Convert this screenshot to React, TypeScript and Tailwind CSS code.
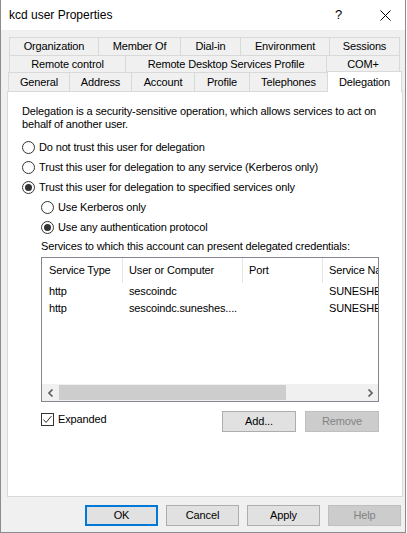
import React from 'react';

const font = { fontFamily: '"Liberation Sans", Arial, sans-serif' };

function Radio({ checked, label }: { checked?: boolean; label: string }) {
  return (
    <div className="flex items-center h-[13px]">
      <span className="w-[13px] h-[13px] rounded-full border border-[#333333] bg-white flex items-center justify-center shrink-0">
        {checked && <span className="w-[7px] h-[7px] rounded-full bg-[#333333]" />}
      </span>
      <span className="ml-[4px] whitespace-nowrap">{label}</span>
    </div>
  );
}

function Tab({ label, w, h, first }: { label: string; w: number; h: string; first?: boolean }) {
  return (
    <div
      className={`${h} ${first ? '' : '-ml-px'} border-t border-l border-r border-[#d9d9d9] bg-[#f0f0f0] flex items-center justify-center whitespace-nowrap`}
      style={{ width: w }}
    >
      {label}
    </div>
  );
}

function Btn({ label, disabled, primary, w = 'w-[73px]' }: { label: string; disabled?: boolean; primary?: boolean; w?: string }) {
  let cls = 'border border-[#adadad] bg-[#e1e1e1] text-black';
  if (disabled) cls = 'border border-[#bfbfbf] bg-[#cccccc] text-[#838383]';
  if (primary) cls = 'border-2 border-[#0078d7] bg-[#e1e1e1] text-black';
  return <div className={`${w} h-[21px] ${cls} flex items-center justify-center`}>{label}</div>;
}

export default function App() {
  return (
    <div className="w-[406px] h-[533px] bg-[#f0f0f0] border-l border-r border-b border-[#8c8c8c] text-[11px] tracking-[-0.15px] text-black overflow-hidden" style={font}>
      {/* Title bar */}
      <div className="h-[30px] bg-white flex items-center tracking-normal">
        <span className="ml-[8px] text-[12px] flex-1">kcd user Properties</span>
        <span className="text-[13px] w-[16px] mr-[29px]">?</span>
        <svg width="11" height="11" viewBox="0 0 11 11" className="mr-[14px]">
          <path d="M0.5 0.5 L10.5 10.5 M10.5 0.5 L0.5 10.5" stroke="#000" strokeWidth="1" />
        </svg>
      </div>

      {/* Tabs */}
      <div className="mt-[7px]">
        <div className="flex ml-[8px]">
          <Tab first label="Organization" w={90} h="h-[18px]" />
          <Tab label="Member Of" w={83} h="h-[18px]" />
          <Tab label="Dial-in" w={61} h="h-[18px]" />
          <Tab label="Environment" w={90} h="h-[18px]" />
          <Tab label="Sessions" w={71} h="h-[18px]" />
        </div>
        <div className="flex ml-[8px]">
          <Tab first label="Remote control" w={117} h="h-[17px]" />
          <Tab label="Remote Desktop Services Profile" w={202} h="h-[17px]" />
          <Tab label="COM+" w={74} h="h-[17px]" />
        </div>
        <div className="flex ml-[7px] items-start h-[19px]">
          <Tab first label="General" w={62} h="h-[19px]" />
          <Tab label="Address" w={63} h="h-[19px]" />
          <Tab label="Account" w={64} h="h-[19px]" />
          <Tab label="Profile" w={56} h="h-[19px]" />
          <Tab label="Telephones" w={79} h="h-[19px]" />
          <div className="-ml-px -mt-px w-[75px] h-[21px] border-t border-l border-r border-[#d9d9d9] bg-white relative z-10 flex items-center justify-center">
            Delegation
          </div>
        </div>
      </div>

      {/* Panel */}
      <div className="ml-[6px] w-[396px] h-[406px] bg-white border border-[#d9d9d9] pl-[14px] pt-[13px]">
        <div className="leading-[13px] whitespace-nowrap">
          <div>Delegation is a security-sensitive operation, which allows services to act on</div>
          <div>behalf of another user.</div>
        </div>
        <div className="mt-[10px] flex flex-col gap-[7px]">
          <Radio label="Do not trust this user for delegation" />
          <Radio label="Trust this user for delegation to any service (Kerberos only)" />
          <Radio checked label="Trust this user for delegation to specified services only" />
          <div className="ml-[19px] flex flex-col gap-[7px]">
            <Radio label="Use Kerberos only" />
            <Radio checked label="Use any authentication protocol" />
          </div>
        </div>

        <div className="ml-[19px]">
          <div className="mt-[6px] leading-[13px] whitespace-nowrap">Services to which this account can present delegated credentials:</div>
          <div className="mt-[4px] w-[338px] h-[145px] border border-[#828790] bg-white flex flex-col overflow-hidden">
            <div className="flex h-[25px] shrink-0">
              <div className="w-[80px] shrink-0 pl-[7px] flex items-center">Service Type</div>
              <div className="w-px h-full bg-[#e5e5e5] shrink-0" />
              <div className="w-[119px] shrink-0 pl-[6px] flex items-center">User or Computer</div>
              <div className="w-px h-full bg-[#e5e5e5] shrink-0" />
              <div className="w-[79px] shrink-0 pl-[6px] flex items-center">Port</div>
              <div className="w-px h-full bg-[#e5e5e5] shrink-0" />
              <div className="w-[100px] shrink-0 pl-[6px] flex items-center whitespace-nowrap">Service Name</div>
            </div>
            {[['http', 'sescoindc'], ['http', 'sescoindc.suneshes....']].map(([t, u], i) => (
              <div key={i} className="flex h-[17px] items-center shrink-0 whitespace-nowrap">
                <div className="w-[81px] shrink-0 pl-[7px]">{t}</div>
                <div className="w-[120px] shrink-0 pl-[6px]">{u}</div>
                <div className="w-[80px] shrink-0" />
                <div className="w-[100px] shrink-0 pl-[6px]">SUNESHES</div>
              </div>
            ))}
            <div className="flex-1" />
            {/* horizontal scrollbar */}
            <div className="h-[17px] bg-[#f0f0f0] flex items-center shrink-0">
              <div className="w-[17px] h-full flex items-center justify-center">
                <svg width="6" height="8" viewBox="0 0 6 8"><path d="M4.5 0.5 L1 4 L4.5 7.5" stroke="#606060" strokeWidth="1.6" fill="none" /></svg>
              </div>
              <div className="w-[227px] h-[15px] bg-[#cdcdcd]" />
              <div className="flex-1" />
              <div className="w-[17px] h-full flex items-center justify-center">
                <svg width="6" height="8" viewBox="0 0 6 8"><path d="M1.5 0.5 L5 4 L1.5 7.5" stroke="#606060" strokeWidth="1.6" fill="none" /></svg>
              </div>
            </div>
          </div>

          <div className="mt-[9px] flex items-start w-[338px]">
            <div className="flex items-center flex-1">
              <span className="w-[13px] h-[13px] border border-[#333333] bg-white flex items-center justify-center">
                <svg width="11" height="11" viewBox="0 0 11 11"><path d="M1.5 5.5 L4 8.5 L9.5 2" stroke="#333" strokeWidth="1" fill="none" /></svg>
              </span>
              <span className="ml-[4px]">Expanded</span>
            </div>
            <Btn label="Add..." w="w-[74px]" />
            <div className="w-[9px]" />
            <Btn label="Remove" disabled w="w-[74px]" />
          </div>
        </div>
      </div>

      {/* Bottom buttons */}
      <div className="mt-[8px] flex justify-end gap-[8px] pr-[4px]">
        <Btn label="OK" primary />
        <Btn label="Cancel" />
        <Btn label="Apply" />
        <Btn label="Help" disabled />
      </div>
    </div>
  );
}
